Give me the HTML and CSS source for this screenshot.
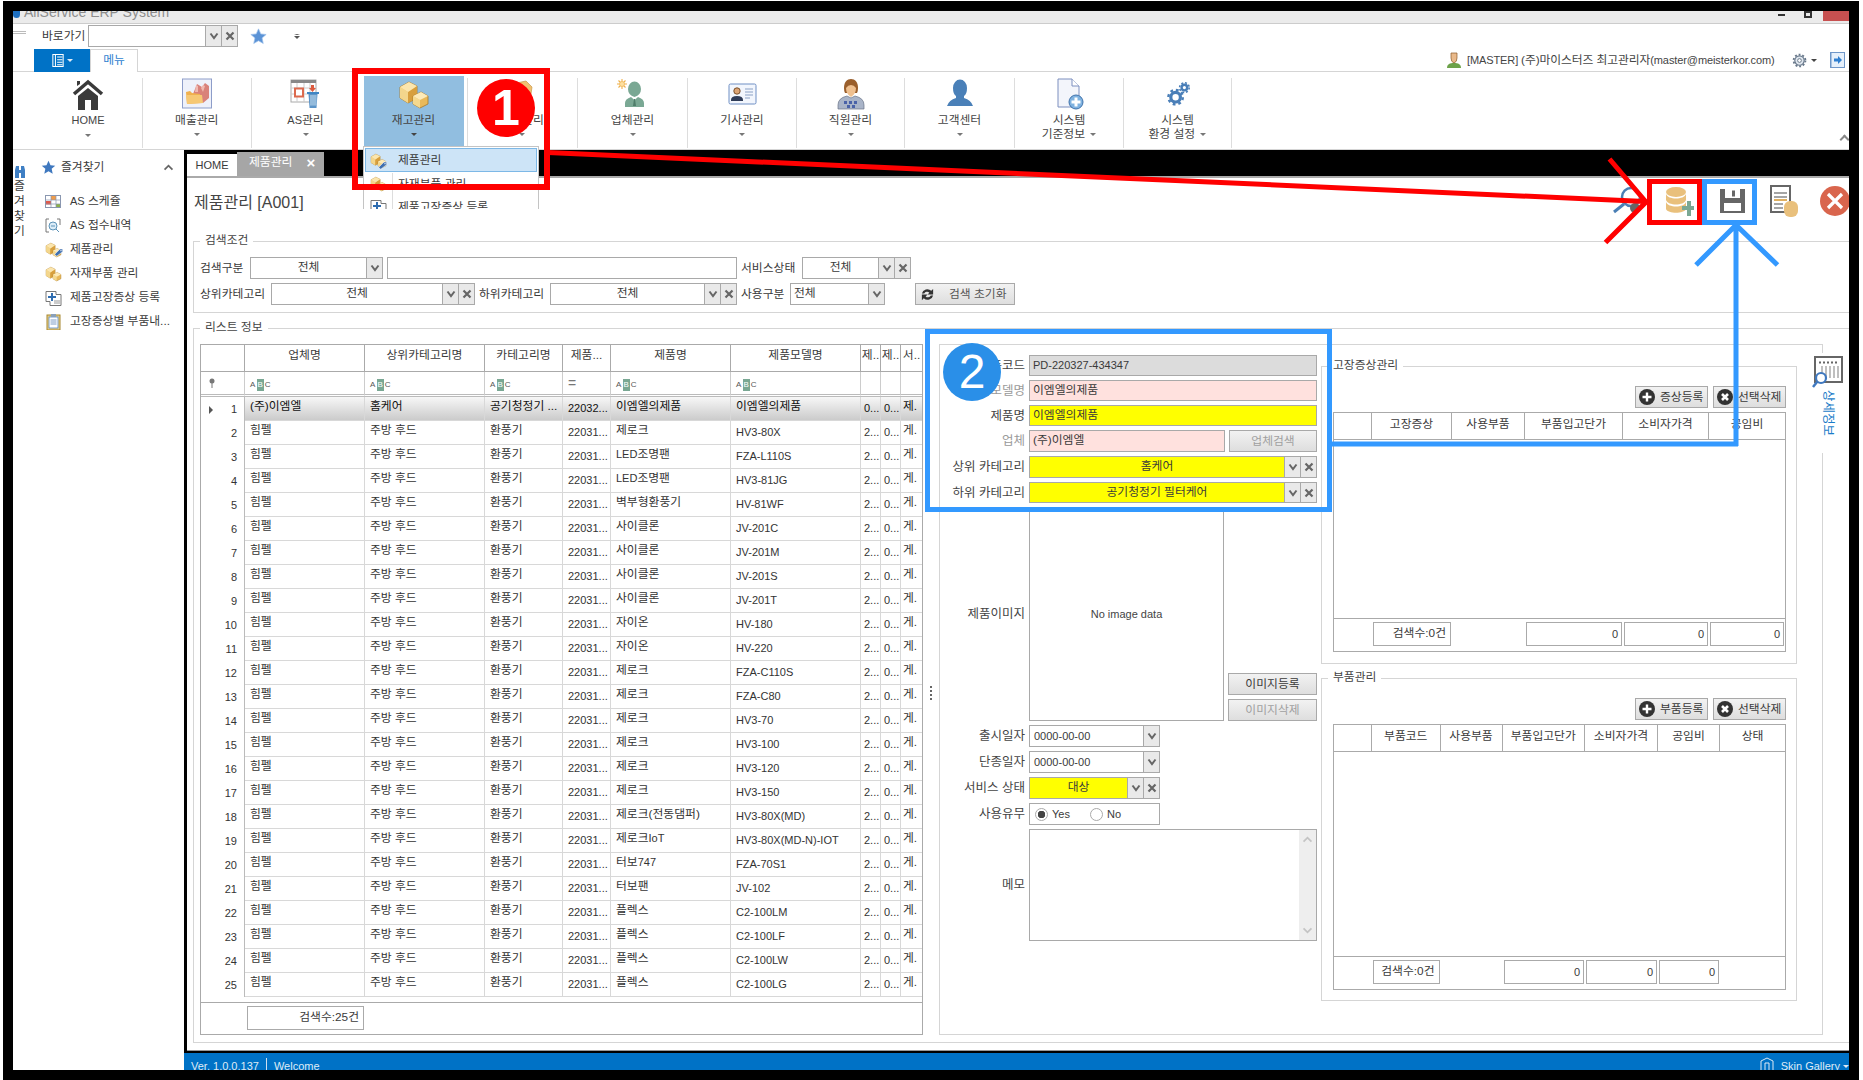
FILE: index.html
```html
<!DOCTYPE html>
<html lang="ko">
<head>
<meta charset="utf-8">
<title>AllService ERP System</title>
<link rel="stylesheet" href="styles.css">
</head>
<body>
<svg class="defs" aria-hidden="true">
  <symbol id="chev" viewBox="0 0 10 8"><path d="M1.5 1.5 5 6l3.500-4.500" fill="none" stroke="#666" stroke-width="2"/></symbol>
  <symbol id="cross" viewBox="0 0 10 10"><path d="M1.500 1.500l7 7m0-7l-7 7" fill="none" stroke="#666" stroke-width="2.200"/></symbol>
  <symbol id="box" viewBox="0 0 32 32">
    <path d="M2 9 11 4l8 4v12l-9 5-8-5z" fill="#e9b95a" stroke="#a87a28" stroke-width=".8"/>
    <path d="M2 9l8 5v11l-8-5z" fill="#f3d68c"/><path d="M10 14l9-6v12l-9 5z" fill="#d79f3e"/>
    <path d="M2 9 11 4l8 4-9 6z" fill="#fbe6ae"/>
    <path d="M15 18l8-4 7 4v8l-8 4-7-4z" fill="#e9b95a" stroke="#a87a28" stroke-width=".8"/>
    <path d="M15 18l7 4v8l-7-4z" fill="#f5d98f"/><path d="M15 18l8-4 7 4-8 4z" fill="#fdeab8"/>
  </symbol>
  <symbol id="tag" viewBox="0 0 18 18">
    <path d="M7 17l-3-3 8-8h4v4z" fill="#3f6fb0" stroke="#fff" stroke-width=".8"/><circle cx="13.500" cy="8.500" r="1" fill="#fff"/>
  </symbol>
</svg>

<div class="screen">
<div class="frame">
<div class="app">

  <div class="titlebar">
    <span class="logo-dot"></span><span class="apptitle">AllService ERP System</span>
    <span class="winctl">
      <span class="win-min"></span><span class="win-max"></span><span class="win-close"></span>
    </span>
  </div>

  <div class="quickbar">
    <span class="grip"></span>
    <span class="qlabel">바로가기</span>
    <div class="combo qcombo"><span class="val"></span><span class="dd"><svg class="ic-chev"><use href="#chev"/></svg></span><span class="dd"><svg class="ic-x"><use href="#cross"/></svg></span></div>
    <svg class="qstar" viewBox="0 0 20 20"><path d="M10 1l2.700 6 6.300.6-4.800 4.200 1.400 6.400L10 15l-5.600 3.200 1.400-6.400L1 7.600 7.300 7z" fill="#5b93d6" stroke="#9cc0ea" stroke-width=".8"/></svg>
    <span class="qmore"></span>
  </div>

  <div class="tabbar">
    <span class="appbtn"><svg viewBox="0 0 14 16" class="appbtn-ic"><path d="M1 1h12v14H1zM4 1v14M6 4h6M6 7h6M6 10h6M6 13h6" fill="none" stroke="#fff" stroke-width="1.200"/></svg><i class="tinyarrow white"></i></span>
    <span class="menutab">메뉴</span>
    <span class="userbox">
      <svg class="uicon" viewBox="0 0 16 16"><path d="M1 16c0-4 3-5 7-5s7 1 7 5z" fill="#6da24a"/><path d="M5 1h6v5q0 4-3 5-3-1-3-5z" fill="#e9b98a" stroke="#8a5a2a" stroke-width=".7"/></svg>
      <span class="utext"><span class="lat">[MASTER] </span>(주)마이스터즈 최고관리자<span class="lat">(master@meisterkor.com)</span></span>
      <svg class="ugear" viewBox="0 0 16 16"><circle cx="8" cy="8" r="5" fill="#dfe6ee" stroke="#67778a" stroke-width="1.200"/><circle cx="8" cy="8" r="6.300" fill="none" stroke="#67778a" stroke-width="2" stroke-dasharray="2 2"/><circle cx="8" cy="8" r="2" fill="#fff" stroke="#67778a"/></svg>
      <i class="tinyarrow dark"></i>
      <svg class="uexit" viewBox="0 0 15 16"><rect x=".5" y=".5" width="14" height="15" fill="#e6f0fb" stroke="#6f97c9"/><path d="M1 1v14" stroke="#6f97c9"/><path d="M4 6.500h4V4l4 4-4 4V9.500H4z" fill="#2f7fd0"/></svg>
    </span>
  </div>

  <div class="ribbon">
    <div class="ritem">
      <svg class="ricon" viewBox="0 0 32 32"><path d="M2 16 16 4l14 12" fill="none" stroke="#3a3a3a" stroke-width="3.600"/><path d="M5 8V3h3v3z" fill="#3a3a3a"/><path d="M6 18 16 10l10 8v14h-7V22h-6v10H6z" fill="#3a3a3a"/></svg>
      <span class="rlabel lat">HOME</span><i class="tinyarrow gray"></i>
    </div>
    <div class="ritem">
      <svg class="ricon" viewBox="0 0 32 32"><rect x="1.500" y="1" width="29" height="29" fill="#eef1fa" stroke="#8d9dc9"/><path d="M12 16 16 6l5 3 3-4 4 3v12l-6 5-7-2z" fill="#d9827a"/><path d="M14 14l1-7 2 1v6zm6-4 2-3 2 1-2 6z" fill="#f0b9b0"/><path d="M5 14l4-1 2 2 8 1 2 9-15 1z" fill="#f0b04e"/><path d="M5 17h16l1 8-16 1z" fill="#f6c874"/></svg>
      <span class="rlabel">매출관리</span><i class="tinyarrow gray"></i>
    </div>
    <div class="ritem">
      <svg class="ricon" viewBox="0 0 32 32"><rect x="1" y="2" width="25" height="22" fill="#fff" stroke="#aaa"/><rect x="1" y="2" width="25" height="3" fill="#888"/><path d="M1 10h25M1 16h25M7 5v19M14 5v19M20 5v19" stroke="#ccc" fill="none"/><rect x="5" y="10.500" width="8" height="8" fill="#fff" stroke="#dc6a4e" stroke-width="2"/><path d="M21 7h3v3h2l-3.500 4-3.500-4h2z" fill="#dc5a3e"/><rect x="17" y="14" width="12" height="2" fill="#3f86c4"/><path d="M18.500 16h9l-1 14h-7z" fill="#5c94c8"/><path d="M20 18h7M20 20h7M20 22h7M20 24h7M20 26h7M21 17v11M23 17v11M25 17v11" stroke="#cfe0f0" stroke-width=".6"/></svg>
      <span class="rlabel"><span class="lat">AS</span>관리</span><i class="tinyarrow gray"></i>
    </div>
    <div class="ritem active">
      <svg class="ricon"><use href="#box"/></svg>
      <span class="rlabel">재고관리</span><i class="tinyarrow dark"></i>
    </div>
    <div class="ritem">
      <svg class="ricon" viewBox="0 0 32 32"><path d="M6 6l14-3 6 6-2 14-14 4z" fill="#f0c070" stroke="#c9984a" stroke-width=".7"/></svg>
      <span class="rlabel">발주관리</span><i class="tinyarrow gray"></i>
    </div>
    <div class="ritem">
      <svg class="ricon" viewBox="0 0 32 32"><g stroke="#eeb04a" stroke-width="1.100"><path d="M5 1v10M0 6h10M1.500 2.500l7 7m0-7l-7 7"/></g><circle cx="5" cy="6" r="2.500" fill="#fde0a0" stroke="#eeb04a" stroke-width=".6"/><path d="M11 11a6.500 7.500 0 1 1 13 0q0 6-6.500 8-6.500-2-6.500-8z" fill="#7aa894"/><path d="M8 29v-4q0-4 6-6l3.500 3 3.500-3q6 2 6 6v4z" fill="#7aa894"/><path d="M17 21h1l1 7h-3z" fill="#4f7d6a"/></svg>
      <span class="rlabel">업체관리</span><i class="tinyarrow gray"></i>
    </div>
    <div class="ritem">
      <svg class="ricon" viewBox="0 0 32 32"><rect x="3" y="6" width="27" height="20" rx="1.500" fill="#f2f6fd" stroke="#6f8fc4"/><circle cx="11" cy="13" r="3.200" fill="#dca474" stroke="#6d4520" stroke-width=".9"/><path d="M5 23v-1q0-4 6-4t6 4v1z" fill="#2f3c58"/><path d="M19 11h8M19 14h8M19 17h8M19 20h5" stroke="#8aa0c4" fill="none"/></svg>
      <span class="rlabel">기사관리</span><i class="tinyarrow gray"></i>
    </div>
    <div class="ritem">
      <svg class="ricon" viewBox="0 0 32 32"><path d="M9 10C9 4 12 1 16 1s7 3 7 9q0 3-1 5H10q-1-2-1-5z" fill="#9a5f2c"/><path d="M11 10q2-3 5-3t5 3q0 6-5 9-5-3-5-9z" fill="#efc08f"/><path d="M3 31v-4q0-7 9-9l4 2 4-2q9 2 9 9v4z" fill="#a9b4c8" stroke="#6a7486" stroke-width=".7"/><path d="M9 23h3v3H9zm5 0h3v3h-3zm5 0h3v3h-3zm-7 4h3v3h-3zm5 0h3v3h-3z" fill="#4a62a8"/></svg>
      <span class="rlabel">직원관리</span><i class="tinyarrow gray"></i>
    </div>
    <div class="ritem">
      <svg class="ricon" viewBox="0 0 32 32"><path d="M9 10a7 8.500 0 1 1 14 0q0 6-3 8v2q7 2 9 8H3q2-6 9-8v-2q-3-2-3-8z" fill="#4a80b8"/></svg>
      <span class="rlabel">고객센터</span><i class="tinyarrow gray"></i>
    </div>
    <div class="ritem">
      <svg class="ricon" viewBox="0 0 32 32"><path d="M5 1h14l7 7v21H5z" fill="#f3f5fb" stroke="#7d8fbf"/><path d="M19 1v7h7" fill="#fff" stroke="#7d8fbf"/><circle cx="23" cy="24" r="7" fill="#7fb2e0" stroke="#3f72ab"/><path d="M21.500 19.500h3v3h3v3h-3v3h-3v-3h-3v-3h3z" fill="#fff"/></svg>
      <span class="rlabel">시스템<br>기준정보 <i class="tinyarrow gray inl"></i></span>
    </div>
    <div class="ritem">
      <svg class="ricon" viewBox="-5 -4 40 40"><circle cx="12" cy="20" r="6" fill="none" stroke="#4a7fb8" stroke-width="4"/><circle cx="12" cy="20" r="9" fill="none" stroke="#4a7fb8" stroke-width="3" stroke-dasharray="3.500 3.580"/><circle cx="23" cy="8" r="3.500" fill="none" stroke="#4a7fb8" stroke-width="3"/><circle cx="23" cy="8" r="6" fill="none" stroke="#4a7fb8" stroke-width="2" stroke-dasharray="2.500 2.210"/></svg>
      <span class="rlabel">시스템<br>환경 설정 <i class="tinyarrow gray inl"></i></span>
    </div>
    <span class="rcollapse"></span>
  </div>

  <div class="main">
    <aside class="sidebar">
      <div class="strip">
        <svg class="binoc" viewBox="0 0 12 14"><path d="M1 5l1-4h3v4h2V1h3l1 4v8H7V8H5v5H1z" fill="#3f7fc4"/></svg>
        <span class="striptext">즐겨찾기</span>
      </div>
      <div class="favs">
        <div class="favhead">
          <svg class="fstar" viewBox="0 0 20 20"><path d="M10 1l2.700 6 6.300.6-4.800 4.200 1.400 6.400L10 15l-5.600 3.200 1.400-6.400L1 7.600 7.300 7z" fill="#3f78bf"/></svg>
          <span>즐겨찾기</span>
          <svg class="fchev" viewBox="0 0 12 8"><path d="M1.500 6.500 6 2l4.500 4.500" fill="none" stroke="#666" stroke-width="2"/></svg>
        </div>
        <ul class="favlist">
          <li><svg class="fic" viewBox="0 0 17 17"><rect x=".5" y="2.500" width="15" height="12" fill="#fff" stroke="#8a97b0"/><rect x="1" y="8" width="5" height="3.500" fill="#e05a4a"/><rect x="6" y="3" width="5" height="4" fill="#ef9c4a"/><rect x="11" y="11" width="4" height="3" fill="#8cb04a"/><path d="M6 3v11M11 3v11M1 7h14M1 11h14" stroke="#8a97b0" stroke-width=".7" fill="none"/></svg><span class="lat">AS</span>&nbsp;스케쥴</li>
          <li><svg class="fic" viewBox="0 0 17 17"><path d="M4 2H1v13h3m8-13h3v6" fill="none" stroke="#777"/><circle cx="8" cy="9" r="4" fill="#dbecf7" stroke="#5c93b8"/><path d="M6 9h4M11 12l3 3" stroke="#5c93b8" fill="none"/></svg><span class="lat">AS</span>&nbsp;접수내역</li>
          <li><svg class="fic"><use href="#box"/></svg><svg class="ftag"><use href="#tag"/></svg>제품관리</li>
          <li><svg class="fic"><use href="#box"/></svg>자재부품 관리</li>
          <li><svg class="fic" viewBox="0 0 17 17"><path d="M1 2.500h10v3h5v11H5v-4H1z" fill="#fff" stroke="#777"/><path d="M6 4h2v3h3v2H8v3H6V9H3V7h3z" fill="#2f6db0"/><path d="M9 12h6M9 14h6" stroke="#999"/></svg>제품고장증상 등록</li>
          <li><svg class="fic" viewBox="0 0 17 17"><rect x="2" y="2" width="13" height="15" fill="#ecd28a" stroke="#a6862e"/><rect x="4" y="4" width="9" height="11" fill="#fff" stroke="#3f78bf" stroke-width=".7"/><rect x="6" y="1" width="5" height="3" fill="#8aa0b8"/><path d="M5.500 7h6M5.500 9h6M5.500 11h6" stroke="#5c83b8" stroke-width=".8"/></svg>고장증상별 부품내...</li>
        </ul>
      </div>
    </aside>

    <section class="workspace">
      <div class="worktabs">
        <span class="wtab lat">HOME</span>
        <span class="wtab on">제품관리<b class="wclose">×</b></span>
      </div>
      <div class="content">
        <div class="head">
          <h1 class="pagetitle">제품관리 [A001]</h1>
          <div class="tools">
            <svg class="t-search" viewBox="0 0 38 30"><circle cx="19" cy="12" r="9" fill="none" stroke="#4a7fb5" stroke-width="2.500"/><path d="M12 19 2 27" stroke="#4a7fb5" stroke-width="3"/><circle cx="23" cy="23" r="5" fill="#666"/></svg>
            <svg class="t-db" viewBox="0 0 29 32"><ellipse cx="11" cy="7" rx="10" ry="5" fill="#e9c07c"/><path d="M1 9c2 6 18 6 20 0v6c-2 6-18 6-20 0z" fill="#e9c07c"/><path d="M1 17c2 6 18 6 20 0v7c-2 5-18 5-20 0z" fill="#e9c07c"/><path d="M17 21h5v-5h4v5h3v4h-3v6h-4v-6h-5z" fill="#7aa894"/></svg>
            <svg class="t-save" viewBox="0 0 25 32"><path d="M0 4h25v24H0z" fill="#666"/><rect x="5" y="4" width="15" height="9" fill="#fff"/><rect x="12" y="5.500" width="3" height="6" fill="#666"/><rect x="4" y="18" width="17" height="8" fill="#fff"/></svg>
            <svg class="t-doc" viewBox="0 0 28 32"><rect x="1" y="1" width="19" height="26" fill="#fff" stroke="#666" stroke-width="2"/><path d="M4 8h13M4 12h13" stroke="#888" stroke-width="1.500"/><path d="M4 15h13" stroke="#e0b060" stroke-width="2"/><path d="M4 19h9M4 23h9" stroke="#888" stroke-width="1.500"/><rect x="14" y="16" width="14" height="16" rx="6" fill="#e9c07c"/></svg>
            <svg class="t-close" viewBox="0 0 30 32"><circle cx="15" cy="16" r="15" fill="#d9654d"/><path d="M8 9l14 14m0-14L8 23" stroke="#fff" stroke-width="3.200"/></svg>
          </div>
        </div>

        <div class="group search">
          <span class="gtitle">검색조건</span>
          <div class="srow">
            <span class="w46">검색구분</span>
            <div class="combo w133"><span class="val">전체</span><span class="dd"><svg class="ic-chev"><use href="#chev"/></svg></span></div>
            <div class="plain w350"></div>
            <span class="w57">서비스상태</span>
            <div class="combo w109"><span class="val">전체</span><span class="dd"><svg class="ic-chev"><use href="#chev"/></svg></span><span class="dd"><svg class="ic-x"><use href="#cross"/></svg></span></div>
          </div>
          <div class="srow">
            <span class="w67">상위카테고리</span>
            <div class="combo w204"><span class="val">전체</span><span class="dd"><svg class="ic-chev"><use href="#chev"/></svg></span><span class="dd"><svg class="ic-x"><use href="#cross"/></svg></span></div>
            <span class="w67">하위카테고리</span>
            <div class="combo w187"><span class="val">전체</span><span class="dd"><svg class="ic-chev"><use href="#chev"/></svg></span><span class="dd"><svg class="ic-x"><use href="#cross"/></svg></span></div>
            <span class="w45">사용구분</span>
            <div class="combo w95"><span class="val left">전체</span><span class="dd"><svg class="ic-chev"><use href="#chev"/></svg></span></div>
            <button class="btn reset"><svg class="ic-refresh" viewBox="0 0 16 16"><path d="M2 7a6 6 0 0 1 10-3l2-2v6H8l2-2a3.500 3.500 0 0 0-5.500 1zM14 9a6 6 0 0 1-10 3l-2 2V8h6l-2 2a3.500 3.500 0 0 0 5.500-1z" fill="#333"/></svg><span>검색 초기화</span></button>
          </div>
        </div>

        <div class="group listgroup">
          <span class="gtitle">리스트 정보</span>

          <div class="gridbox">
            <table class="grid">
              <colgroup><col class="c0"><col class="c1"><col class="c1"><col class="c3"><col class="c4"><col class="c1"><col class="c6"><col class="c7"><col class="c7"><col class="c9"></colgroup>
              <thead>
                <tr class="hrow"><th></th><th>업체명</th><th>상위카테고리명</th><th>카테고리명</th><th>제품...</th><th>제품명</th><th>제품모델명</th><th>제..</th><th>제..</th><th>서..</th></tr>
                <tr class="frow-g"><td class="pin"><svg class="ic-pin" viewBox="0 0 6 10"><circle cx="3" cy="3" r="2.500" fill="#777"/><path d="M3 5v5" stroke="#777"/></svg></td><td><span class="abc">A<b>B</b>C</span></td><td><span class="abc">A<b>B</b>C</span></td><td><span class="abc">A<b>B</b>C</span></td><td class="eq">=</td><td><span class="abc">A<b>B</b>C</span></td><td><span class="abc">A<b>B</b>C</span></td><td></td><td></td><td></td></tr>
              </thead>
              <tbody>
                <tr class="sel"><td class="rh"><i class="rowtri"></i>1</td><td>(주)이엠엘</td><td>홈케어</td><td>공기청정기 ...</td><td class="n">22032...</td><td>이엠엘의제품</td><td>이엠엘의제품</td><td class="n">0...</td><td class="n">0...</td><td>제.</td></tr>
                <tr><td class="rh">2</td><td>힘펠</td><td>주방 후드</td><td>환풍기</td><td class="n">22031...</td><td>제로크</td><td class="n">HV3-80X</td><td class="n">2...</td><td class="n">0...</td><td>게.</td></tr>
                <tr><td class="rh">3</td><td>힘펠</td><td>주방 후드</td><td>환풍기</td><td class="n">22031...</td><td><span class="lat">LED</span>조명팬</td><td class="n">FZA-L110S</td><td class="n">2...</td><td class="n">0...</td><td>게.</td></tr>
                <tr><td class="rh">4</td><td>힘펠</td><td>주방 후드</td><td>환풍기</td><td class="n">22031...</td><td><span class="lat">LED</span>조명팬</td><td class="n">HV3-81JG</td><td class="n">2...</td><td class="n">0...</td><td>게.</td></tr>
                <tr><td class="rh">5</td><td>힘펠</td><td>주방 후드</td><td>환풍기</td><td class="n">22031...</td><td>벽부형환풍기</td><td class="n">HV-81WF</td><td class="n">2...</td><td class="n">0...</td><td>게.</td></tr>
                <tr><td class="rh">6</td><td>힘펠</td><td>주방 후드</td><td>환풍기</td><td class="n">22031...</td><td>사이클론</td><td class="n">JV-201C</td><td class="n">2...</td><td class="n">0...</td><td>게.</td></tr>
                <tr><td class="rh">7</td><td>힘펠</td><td>주방 후드</td><td>환풍기</td><td class="n">22031...</td><td>사이클론</td><td class="n">JV-201M</td><td class="n">2...</td><td class="n">0...</td><td>게.</td></tr>
                <tr><td class="rh">8</td><td>힘펠</td><td>주방 후드</td><td>환풍기</td><td class="n">22031...</td><td>사이클론</td><td class="n">JV-201S</td><td class="n">2...</td><td class="n">0...</td><td>게.</td></tr>
                <tr><td class="rh">9</td><td>힘펠</td><td>주방 후드</td><td>환풍기</td><td class="n">22031...</td><td>사이클론</td><td class="n">JV-201T</td><td class="n">2...</td><td class="n">0...</td><td>게.</td></tr>
                <tr><td class="rh">10</td><td>힘펠</td><td>주방 후드</td><td>환풍기</td><td class="n">22031...</td><td>자이온</td><td class="n">HV-180</td><td class="n">2...</td><td class="n">0...</td><td>게.</td></tr>
                <tr><td class="rh">11</td><td>힘펠</td><td>주방 후드</td><td>환풍기</td><td class="n">22031...</td><td>자이온</td><td class="n">HV-220</td><td class="n">2...</td><td class="n">0...</td><td>게.</td></tr>
                <tr><td class="rh">12</td><td>힘펠</td><td>주방 후드</td><td>환풍기</td><td class="n">22031...</td><td>제로크</td><td class="n">FZA-C110S</td><td class="n">2...</td><td class="n">0...</td><td>게.</td></tr>
                <tr><td class="rh">13</td><td>힘펠</td><td>주방 후드</td><td>환풍기</td><td class="n">22031...</td><td>제로크</td><td class="n">FZA-C80</td><td class="n">2...</td><td class="n">0...</td><td>게.</td></tr>
                <tr><td class="rh">14</td><td>힘펠</td><td>주방 후드</td><td>환풍기</td><td class="n">22031...</td><td>제로크</td><td class="n">HV3-70</td><td class="n">2...</td><td class="n">0...</td><td>게.</td></tr>
                <tr><td class="rh">15</td><td>힘펠</td><td>주방 후드</td><td>환풍기</td><td class="n">22031...</td><td>제로크</td><td class="n">HV3-100</td><td class="n">2...</td><td class="n">0...</td><td>게.</td></tr>
                <tr><td class="rh">16</td><td>힘펠</td><td>주방 후드</td><td>환풍기</td><td class="n">22031...</td><td>제로크</td><td class="n">HV3-120</td><td class="n">2...</td><td class="n">0...</td><td>게.</td></tr>
                <tr><td class="rh">17</td><td>힘펠</td><td>주방 후드</td><td>환풍기</td><td class="n">22031...</td><td>제로크</td><td class="n">HV3-150</td><td class="n">2...</td><td class="n">0...</td><td>게.</td></tr>
                <tr><td class="rh">18</td><td>힘펠</td><td>주방 후드</td><td>환풍기</td><td class="n">22031...</td><td>제로크(전동댐퍼)</td><td class="n">HV3-80X(MD)</td><td class="n">2...</td><td class="n">0...</td><td>게.</td></tr>
                <tr><td class="rh">19</td><td>힘펠</td><td>주방 후드</td><td>환풍기</td><td class="n">22031...</td><td>제로크<span class="lat">IoT</span></td><td class="n">HV3-80X(MD-N)-IOT</td><td class="n">2...</td><td class="n">0...</td><td>게.</td></tr>
                <tr><td class="rh">20</td><td>힘펠</td><td>주방 후드</td><td>환풍기</td><td class="n">22031...</td><td>터보<span class="lat">747</span></td><td class="n">FZA-70S1</td><td class="n">2...</td><td class="n">0...</td><td>게.</td></tr>
                <tr><td class="rh">21</td><td>힘펠</td><td>주방 후드</td><td>환풍기</td><td class="n">22031...</td><td>터보팬</td><td class="n">JV-102</td><td class="n">2...</td><td class="n">0...</td><td>게.</td></tr>
                <tr><td class="rh">22</td><td>힘펠</td><td>주방 후드</td><td>환풍기</td><td class="n">22031...</td><td>플렉스</td><td class="n">C2-100LM</td><td class="n">2...</td><td class="n">0...</td><td>게.</td></tr>
                <tr><td class="rh">23</td><td>힘펠</td><td>주방 후드</td><td>환풍기</td><td class="n">22031...</td><td>플렉스</td><td class="n">C2-100LF</td><td class="n">2...</td><td class="n">0...</td><td>게.</td></tr>
                <tr><td class="rh">24</td><td>힘펠</td><td>주방 후드</td><td>환풍기</td><td class="n">22031...</td><td>플렉스</td><td class="n">C2-100LW</td><td class="n">2...</td><td class="n">0...</td><td>게.</td></tr>
                <tr><td class="rh">25</td><td>힘펠</td><td>주방 후드</td><td>환풍기</td><td class="n">22031...</td><td>플렉스</td><td class="n">C2-100LG</td><td class="n">2...</td><td class="n">0...</td><td>게.</td></tr>
              </tbody>
            </table>
            <div class="gridfoot"><span class="sumbox countbox">검색수:25건</span></div>
          </div>

          <div class="splitter"><i></i><i></i><i></i><i></i></div>

          <div class="detail">
            <div class="form">
              <div class="frow h21"><label>제품코드</label><div class="field gray lat">PD-220327-434347</div></div>
              <div class="frow h21"><label class="dim">제품모델명</label><div class="field pink">이엠엘의제품</div></div>
              <div class="frow h21"><label>제품명</label><div class="field yellow">이엠엘의제품</div></div>
              <div class="frow"><label class="dim">업체</label><div class="splitfield"><div class="field pink">(주)이엠엘</div><button class="btn off">업체검색</button></div></div>
              <div class="frow"><label>상위 카테고리</label><div class="combo yellow"><span class="val">홈케어</span><span class="dd"><svg class="ic-chev"><use href="#chev"/></svg></span><span class="dd"><svg class="ic-x"><use href="#cross"/></svg></span></div></div>
              <div class="frow h21"><label>하위 카테고리</label><div class="combo yellow"><span class="val">공기청정기 필터케어</span><span class="dd"><svg class="ic-chev"><use href="#chev"/></svg></span><span class="dd"><svg class="ic-x"><use href="#cross"/></svg></span></div></div>
              <div class="frow imgrow">
                <label>제품이미지</label>
                <div class="imgwrap">
                  <div class="imgbox lat">No image data</div>
                  <div class="imgbtns"><button class="btn">이미지등록</button><button class="btn off">이미지삭제</button></div>
                </div>
              </div>
              <div class="frow"><label>출시일자</label><div class="combo w131"><span class="val left lat">0000-00-00</span><span class="dd"><svg class="ic-chev"><use href="#chev"/></svg></span></div></div>
              <div class="frow"><label>단종일자</label><div class="combo w131"><span class="val left lat">0000-00-00</span><span class="dd"><svg class="ic-chev"><use href="#chev"/></svg></span></div></div>
              <div class="frow"><label>서비스 상태</label><div class="combo w131 yellow"><span class="val">대상</span><span class="dd"><svg class="ic-chev"><use href="#chev"/></svg></span><span class="dd"><svg class="ic-x"><use href="#cross"/></svg></span></div></div>
              <div class="frow"><label>사용유무</label><div class="radios w131 lat"><span class="radio on"></span><span class="rtext">Yes</span><span class="radio"></span><span>No</span></div></div>
              <div class="frow memorow"><label>메모</label><div class="memo"><span class="memoscroll"><svg class="ic-mchev" viewBox="0 0 12 8"><path d="M1.500 6.500 6 2l4.500 4.500" fill="none" stroke="#c4c4c4" stroke-width="2"/></svg><svg class="ic-mchev" viewBox="0 0 12 8"><path d="M1.500 1.500 6 6l4.500-4.500" fill="none" stroke="#c4c4c4" stroke-width="2"/></svg></span></div></div>
            </div>

            <div class="subs">
              <div class="group sub g1">
                <span class="gtitle">고장증상관리</span>
                <div class="subbtns">
                  <button class="btn act"><svg class="ic-circ" viewBox="0 0 16 16"><circle cx="8" cy="8" r="8" fill="#333"/><path d="M6.800 3.500h2.400v3.300h3.300v2.400H9.200v3.300H6.800V9.200H3.500V6.800h3.300z" fill="#fff"/></svg>증상등록</button>
                  <button class="btn act"><svg class="ic-circ" viewBox="0 0 16 16"><circle cx="8" cy="8" r="8" fill="#333"/><path d="M5 5l6 6m0-6l-6 6" stroke="#fff" stroke-width="2.600"/></svg>선택삭제</button>
                </div>
                <div class="subtable">
                  <div class="shead sym"><span></span><span>고장증상</span><span>사용부품</span><span>부품입고단가</span><span>소비자가격</span><span>공임비</span></div>
                  <div class="sbody"></div>
                  <div class="sfoot sym"><span></span><span class="sumbox">검색수:0건</span><span></span><span class="sumbox num">0</span><span class="sumbox num">0</span><span class="sumbox num">0</span></div>
                </div>
              </div>
              <div class="group sub g2">
                <span class="gtitle">부품관리</span>
                <div class="subbtns">
                  <button class="btn act"><svg class="ic-circ" viewBox="0 0 16 16"><circle cx="8" cy="8" r="8" fill="#333"/><path d="M6.800 3.500h2.400v3.300h3.300v2.400H9.200v3.300H6.800V9.200H3.500V6.800h3.300z" fill="#fff"/></svg>부품등록</button>
                  <button class="btn act"><svg class="ic-circ" viewBox="0 0 16 16"><circle cx="8" cy="8" r="8" fill="#333"/><path d="M5 5l6 6m0-6l-6 6" stroke="#fff" stroke-width="2.600"/></svg>선택삭제</button>
                </div>
                <div class="subtable">
                  <div class="shead parts"><span></span><span>부품코드</span><span>사용부품</span><span>부품입고단가</span><span>소비자가격</span><span>공임비</span><span>상태</span></div>
                  <div class="sbody"></div>
                  <div class="sfoot parts"><span></span><span class="sumbox">검색수:0건</span><span></span><span class="sumbox num">0</span><span class="sumbox num">0</span><span class="sumbox num">0</span><span></span></div>
                </div>
              </div>
            </div>
          </div>

          <div class="sidetab">
            <svg class="ic-detail" viewBox="0 0 31 33"><rect x="3" y="1" width="27" height="25" fill="#fff" stroke="#666" stroke-width="2"/><path d="M7 6.500h20" stroke="#666" stroke-width="2" stroke-dasharray="2 2"/><path d="M10 10v12M14 10v12M18 10v12M22 10v12M26 10v12" stroke="#aaa" stroke-width="1.500"/><circle cx="9" cy="22" r="5" fill="#fff" stroke="#3f78bf" stroke-width="2.200"/><path d="M5 26l-4 5" stroke="#3f78bf" stroke-width="2.500"/></svg>
            <span class="sidetext">상세정보</span>
          </div>
        </div>
      </div>
      <div class="statusbar">
        <span class="lat">Ver. 1.0.0.137</span><i class="sbar"></i><span class="lat">Welcome</span>
        <span class="skin"><svg class="ic-skin" viewBox="0 0 14 16"><path d="M1 15V4l6-3 6 3v11M5 15V6h4v9" fill="none" stroke="#dfeaf5"/></svg><span class="lat">Skin Gallery</span><i class="tinyarrow white"></i></span>
      </div>
    </section>
  </div>

</div>
</div>

<div class="flyout">
  <div class="fly-item hot"><svg class="fly-ic"><use href="#box"/></svg><svg class="fly-tag"><use href="#tag"/></svg>제품관리</div>
  <div class="fly-item"><svg class="fly-ic"><use href="#box"/></svg>자재부품 관리</div>
  <div class="fly-item"><svg class="fly-ic" viewBox="0 0 17 17"><path d="M1 2.500h10v3h5v11H5v-4H1z" fill="#fff" stroke="#777"/><path d="M6 4h2v3h3v2H8v3H6V9H3V7h3z" fill="#2f6db0"/></svg>제품고장증상 등록</div>
</div>

<svg class="marks" viewBox="0 0 1863 1080" aria-hidden="true">
  <g fill="none" stroke="#f00">
    <rect x="355" y="71" width="192" height="116" stroke-width="6"/>
    <path d="M548 152.500 1645 201.500" stroke-width="5"/>
    <path d="M1609.500 159 1646 202 1605.500 242.500" stroke-width="5"/>
    <rect x="1649.500" y="181.500" width="50" height="41" stroke-width="5"/>
  </g>
  <g fill="none" stroke="#39f">
    <rect x="1704.500" y="181.500" width="50" height="41" stroke-width="5"/>
    <path d="M1736 225V446M1696 265 1736 225 1777.500 265" stroke-width="5"/>
    <path d="M1332 444H1738" stroke-width="5"/>
    <rect x="927.500" y="331.500" width="402" height="178" stroke-width="5"/>
  </g>
</svg>
<div class="badge red">1</div>
<div class="badge blue">2</div>
</div>
</body>
</html>
```

FILE: styles.css
```css
* { box-sizing: border-box; }
html, body { margin: 0; padding: 0; background: #fff; }
body { font: 11.8px/14px "Liberation Sans", "Noto Sans CJK KR", sans-serif; color: #3a3a3a; overflow: hidden; }
.defs { position: absolute; width: 0; height: 0; }
.lat { font-size: 11px; font-family: "Liberation Sans", sans-serif; }
i { font-style: normal; }
ul { list-style: none; margin: 0; padding: 0; }
button { font: inherit; color: inherit; margin: 0; }

.screen { position: relative; width: 1863px; height: 1080px; padding: 1px 4px 0 3px; overflow: hidden; }
.frame { background: #000; padding: 10px; height: 1079px; }
.app { width: 1836px; height: 1059px; background: #fff; display: flex; flex-direction: column; overflow: hidden; }

.tinyarrow { display: inline-block; width: 0; height: 0; border: 3px solid transparent; border-bottom: 0; border-top: 3px solid #777; }
.tinyarrow.white { border-top-color: #dfeaf5; }
.tinyarrow.dark { border-top-color: #444; }
.tinyarrow.gray { border-top-color: #777; }
.tinyarrow.inl { vertical-align: middle; margin-left: 2px; }

/* title */
.titlebar { height: 13px; background: #ebebeb; border-bottom: 1px solid #ccc; display: flex; align-items: flex-start; overflow: hidden; position: relative; }
.logo-dot { width: 7px; height: 7px; background: #1e6fc0; border-radius: 0 0 4px 4px; margin: 0 4px 0 0; flex: none; }
.apptitle { font-size: 14px; line-height: 16px; color: #8d8d8d; margin-top: -7px; white-space: nowrap; }
.winctl { margin-left: auto; display: flex; align-items: flex-start; height: 12px; }
.win-min { width: 7px; height: 2px; background: #333; margin: 3px 19px 0 0; }
.win-max { width: 8px; height: 7px; border: 2px solid #333; margin: 0 11px 0 0; }
.win-close { width: 26px; height: 10px; background: #c75050; }

/* quick */
.quickbar { height: 25px; display: flex; align-items: center; position: relative; padding-bottom: 1px; }
.grip { width: 13px; height: 3px; border-top: 1px solid #bbb; border-bottom: 1px solid #bbb; margin-right: 16px; margin-top: -8px; }
.qlabel { width: 46px; }
.combo { height: 22px; border: 1px solid #a9a9a9; display: flex; background: #fff; }
.combo .val { flex: 1; text-align: center; line-height: 18px; white-space: nowrap; overflow: hidden; }
.combo .val.left { text-align: left; padding-left: 3px; }
.combo .val.lat { padding-left: 4px; line-height: 20px; }
.combo .dd { width: 16px; flex: none; background: #e9e9e9; border-left: 1px solid #a9a9a9; display: flex; align-items: center; justify-content: center; }
.ic-chev { width: 10px; height: 8px; }
.ic-x { width: 10px; height: 10px; }
.qcombo { width: 150px; }
.qstar { width: 17px; height: 17px; margin-left: 12px; }
.qmore { width: 5px; height: 5px; margin-left: 27px; border-top: 1px solid #555; border-left: 3px solid transparent; border-right: 3px solid transparent; position: relative; }
.qmore::after { content: ""; display: block; border: 3px solid transparent; border-bottom: 0; border-top-color: #555; margin: 1px 0 0 -3px; }

/* tabbar */
.tabbar { height: 23px; display: flex; align-items: stretch; border-bottom: 1px solid #d5d5d5; padding-left: 21px; }
.appbtn { width: 56px; background: #0072c6; display: flex; align-items: center; justify-content: center; gap: 3px; height: 23px; }
.appbtn-ic { width: 12px; height: 15px; }
.menutab { width: 48px; height: 23px; border: 1px solid #d5d5d5; border-bottom: 0; background: #fff; text-align: center; line-height: 20px; color: #2f7fd0; }
.userbox { margin-left: auto; display: flex; align-items: center; padding-right: 4px; }
.uicon { width: 16px; height: 16px; margin-right: 5px; }
.utext { white-space: nowrap; width: 320px; color: #444; letter-spacing: -.1px; }
.ugear { width: 15px; height: 15px; margin-left: 5px; }
.userbox > .tinyarrow { margin: 0 13px 0 4px; }
.uexit { width: 15px; height: 16px; }

/* ribbon */
.ribbon { height: 78px; border-bottom: 1px solid #d5d5d5; padding: 6px 0 0 21px; display: grid; grid-template-columns: 109px 108.500px 109px 107px 110.500px 110px 109px 108px 110px 109px 108px 1fr; position: relative; isolation: isolate; }
.ritem { height: 70px; border-right: 1px solid #ddd; display: flex; flex-direction: column; align-items: center; position: relative; text-align: center; }
.ritem:nth-child(3) { border-right-color: transparent; }
.ricon { width: 32px; height: 32px; flex: none; }
.rlabel { margin-top: 3px; line-height: 14px; color: #444; white-space: nowrap; }
.rlabel.lat { line-height: 15px; }
.ritem > .tinyarrow { margin-top: 6px; }
.ritem.active::before { content: ""; position: absolute; left: 3px; right: 3px; top: -2px; bottom: 2px; background: #91bee0; z-index: -1; }
.rcollapse { width: 7px; height: 7px; border-top: 2px solid #888; border-left: 2px solid #888; transform: rotate(45deg); position: absolute; right: 1px; top: 64px; }

/* main */
.main { flex: 1; display: flex; min-height: 0; }
.sidebar { width: 171px; flex: none; display: flex; }
.strip { width: 21px; padding-top: 15px; display: flex; flex-direction: column; align-items: flex-start; overflow: hidden; }
.binoc { width: 12px; height: 14px; margin-left: 1px; }
.striptext { writing-mode: vertical-rl; text-orientation: upright; margin-top: 1px; letter-spacing: 3px; line-height: 12px; width: 12px; margin-left: -1px; }
.favs { flex: 1; padding-top: 5px; min-width: 0; }
.favhead { height: 24px; display: flex; align-items: center; padding-left: 7px; }
.fstar { width: 15px; height: 15px; margin-right: 5px; }
.fchev { width: 11px; height: 7px; margin-left: auto; margin-right: 10px; }
.favlist { margin-top: 10px; }
.favlist li { height: 24px; display: flex; align-items: center; padding-left: 11px; white-space: nowrap; position: relative; }
.fic { width: 17px; height: 17px; margin-right: 8px; flex: none; }
.ftag { width: 12px; height: 12px; position: absolute; left: 18px; top: 8px; }

/* workspace */
.workspace { flex: 1; background: #000; display: flex; flex-direction: column; min-width: 0; }
.worktabs { height: 26px; padding: 2px 0 0 3px; display: flex; align-items: flex-end; }
.wtab { width: 50px; height: 22px; background: #fff; text-align: center; line-height: 22px; }
.wtab.on { width: 87px; height: 24px; background: #a6a6a6; color: #fff; line-height: 21px; display: flex; justify-content: flex-start; padding-left: 12px; gap: 14px; }
.wclose { font-size: 15px; }
.content { flex: 1; margin-left: 3px; margin-bottom: 2px; background: #fff; border-top: 2px solid #aaa; border-bottom: 1px solid #999; padding-left: 6px; display: flex; flex-direction: column; min-height: 0; overflow: hidden; }
.head { height: 63px; flex: none; display: flex; justify-content: space-between; }
.pagetitle { margin: 15px 0 0 1px; font-size: 16px; line-height: 20px; font-weight: normal; color: #444; }
.tools { display: flex; align-items: flex-start; padding-top: 7px; margin-right: -1px; }
.tools svg { height: 32px; flex: none; }
.t-search { width: 38px; height: 30px !important; }
.t-db { width: 29px; margin-left: 15px; }
.t-save { width: 25px; margin-left: 26px; }
.t-doc { width: 28px; margin-left: 25px; }
.t-close { width: 30px; margin-left: 22px; }

/* groups */
.group { border: 1px solid #d5d5d5; position: relative; flex: none; }
.gtitle { position: absolute; left: 6px; top: -9px; background: #fff; padding: 0 5px; line-height: 15px; color: #444; }
.search { border-right: 0; height: 72px; padding: 15px 0 0 6px; display: flex; flex-direction: column; gap: 4px; }
.srow { display: flex; gap: 4px; height: 22px; align-items: center; white-space: nowrap; }
.plain { height: 22px; border: 1px solid #a9a9a9; }
.w45 { width: 45px; } .w46 { width: 46px; } .w57 { width: 57px; } .w67 { width: 67px; }
.w95 { width: 95px; } .w109 { width: 109px; } .w131 { width: 131px; } .w133 { width: 133px; }
.w187 { width: 187px; } .w204 { width: 204px; } .w350 { width: 350px; }
.btn { height: 22px; border: 1px solid #a9a9a9; background: linear-gradient(#f2f2f2, #dedede); padding: 0; display: flex; align-items: center; justify-content: center; white-space: nowrap; }
.btn.off { color: #a0a0a0; }
.reset { width: 100px; margin-left: 26px; justify-content: flex-start; padding-left: 4px; color: #555; }
.reset span { margin-left: 14px; }
.ic-refresh { width: 15px; height: 15px; }

.listgroup { margin-top: 15px; height: 715px; border-right: 0; padding: 15px 0 0 6px; display: flex; }
.gridbox { width: 723px; height: 691px; border: 1px solid #aaa; flex: none; display: flex; flex-direction: column; }
.grid { width: 721px; table-layout: fixed; border-collapse: separate; border-spacing: 0; }
.c0 { width: 44px; } .c1 { width: 120px; } .c3 { width: 78px; } .c4 { width: 48px; }
.c6 { width: 130px; } .c7 { width: 20px; } .c9 { width: 21px; }
.grid th { height: 27px; font-weight: normal; border-right: 1px solid #aaa; border-bottom: 1px solid #aaa; white-space: nowrap; overflow: hidden; padding: 0 0 6px; }
.grid th:last-child, .grid td:last-child { border-right: 0; }
.frow-g td { height: 25px; border-right: 1px solid #ccc; border-bottom: 3px double #bbb; padding: 0 0 0 5px; }
.frow-g td.pin { padding-left: 8px; }
.ic-pin { width: 6px; height: 10px; display: block; }
.abc { font: 8px/12px "Liberation Sans", sans-serif; color: #555; display: inline-block; letter-spacing: .5px; }
.abc b { background: #7aa894; color: #fff; font-weight: normal; display: inline-block; width: 7px; text-align: center; line-height: 12px; margin: 0 1px; }
.eq { font-size: 14px; color: #777; }
.grid tbody td { height: 24px; padding: 0 0 5px 5px; border-right: 1px solid #d8d8d8; border-bottom: 1px solid #d8d8d8; white-space: nowrap; overflow: hidden; line-height: 18px; color: #333; }
.grid tbody td.rh { text-align: right; padding: 0 7px 0 0; border-bottom: 0; border-right: 1px solid #bbb; font-size: 11px; }
.grid tbody td.n { font-size: 11px; font-family: "Liberation Sans", sans-serif; padding-bottom: 2px; }
.grid td.n:nth-last-child(-n+3) { padding-left: 3px; }
.grid td:last-child { padding-left: 2px; }
.rowtri { float: left; width: 0; height: 0; margin: 6px 0 0 8px; border: 4px solid transparent; border-right: 0; border-left-color: #555; }
.sel td:not(.rh) { background: linear-gradient(#f7f7f7, #cbcbcb); color: #111; }
.gridfoot { margin-top: 5px; border-top: 1px solid #aaa; flex: 1; padding: 3px 0 0 46px; }
.sumbox { display: block; height: 24px; border: 1px solid #aaa; text-align: right; padding-right: 4px; line-height: 20px; white-space: nowrap; background: #fff; }
.sumbox.num { font: 11px/22px "Liberation Sans", sans-serif; padding-right: 3px; }
.countbox { width: 117px; }

.splitter { width: 16px; flex: none; display: flex; flex-direction: column; align-items: center; justify-content: center; gap: 2px; }
.splitter i { width: 2px; height: 2px; background: #666; display: block; }

.detail { width: 884px; height: 691px; flex: none; border: 1px solid #d5d5d5; border-right: 0; display: flex; position: relative; }
.detail::before { content: ""; position: absolute; right: 0; top: 0; height: 8px; border-right: 1px solid #d5d5d5; }
.detail::after { content: ""; position: absolute; right: 0; top: 108px; bottom: 0; border-right: 1px solid #d5d5d5; }
.form { width: 381px; flex: none; padding-top: 10px; display: flex; flex-direction: column; gap: 4px; }
.frow { display: grid; grid-template-columns: 85px 288px; column-gap: 4px; align-items: center; height: 22px; }
.frow.h21 { height: 21px; }
.frow label { text-align: right; font-size: 12.500px; white-space: nowrap; color: #444; }
.frow label.dim { color: #9a9a9a; }
.field { height: 100%; border: 1px solid #a9a9a9; padding: 0 3px; line-height: 18px; white-space: nowrap; }
.field.lat { line-height: 19px; }
.field.gray { background: #dcdcdc; }
.field.pink { background: #ffe1de; }
.field.yellow { background: #ff0; }
.combo.yellow .val { background: #ff0; }
.frow .combo { height: 100%; }
.splitfield { display: grid; grid-template-columns: 196px 88px; gap: 4px; height: 100%; }
.imgrow { height: 214px; }
.imgwrap { display: grid; grid-template-columns: 195px 89px; column-gap: 4px; height: 214px; }
.imgbox { border: 1px solid #a9a9a9; display: flex; align-items: center; justify-content: center; color: #444; }
.imgbtns { display: flex; flex-direction: column; justify-content: flex-end; gap: 4px; }
.radios { height: 22px; border: 1px solid #a9a9a9; display: flex; align-items: center; padding-left: 5px; }
.radio { width: 13px; height: 13px; border: 1px solid #aaa; border-radius: 50%; margin-right: 4px; flex: none; background: #fff; }
.radio.on { background: radial-gradient(circle, #444 0 3.500px, #fff 4px); }
.rtext { width: 38px; }
.memorow { height: 112px; }
.memo { height: 112px; border: 1px solid #a9a9a9; position: relative; display: flex; justify-content: flex-end; }
.memoscroll { width: 17px; background: #eee; display: flex; flex-direction: column; justify-content: space-between; align-items: center; padding: 6px 0; }
.ic-mchev { width: 11px; height: 7px; }

.subs { width: 476px; flex: none; padding-top: 21px; display: flex; flex-direction: column; gap: 14px; }
.sub { padding: 19px 10px 0 11px; display: flex; flex-direction: column; width: 476px; }
.g1 { height: 298px; }
.g2 { height: 323px; }
.subbtns { display: flex; justify-content: flex-end; gap: 5px; }
.btn.act { width: 73px; justify-content: flex-start; padding-left: 3px; gap: 5px; }
.ic-circ { width: 16px; height: 16px; flex: none; }
.subtable { margin-top: 4px; border: 1px solid #aaa; display: flex; flex-direction: column; }
.g1 .subtable { height: 240px; }
.g2 .subtable { height: 266px; }
.sym { display: grid; grid-template-columns: 38px 80px 73px 98px 86px 1fr; }
.parts { display: grid; grid-template-columns: 38px 68.500px 62px 82.500px 73px 62px 1fr; }
.shead { height: 27px; border-bottom: 1px solid #aaa; flex: none; }
.shead span { border-right: 1px solid #aaa; text-align: center; line-height: 22px; white-space: nowrap; overflow: hidden; }
.shead span:last-child { border-right: 0; }
.sbody { flex: 1; }
.sfoot { height: 33px; border-top: 1px solid #aaa; flex: none; padding-top: 3px; }
.sfoot .sumbox { margin: 0 1px 0 1px; }

.sidetab { width: 37px; margin-left: -14.500px; flex: none; display: flex; flex-direction: column; align-items: center; padding-top: 12px; position: relative; }
.ic-detail { width: 31px; height: 33px; }
.sidetext { writing-mode: vertical-rl; text-orientation: sideways; color: #1a7cc8; margin-top: 1px; margin-left: 2px; font-size: 12.500px; line-height: 14px; white-space: nowrap; }

/* status */
.statusbar { height: 17px; flex: none; background: #0072c6; color: #dfeaf5; padding: 5px 0 0 7px; display: flex; align-items: flex-start; overflow: hidden; line-height: 16px; }
.sbar { width: 1px; height: 14px; background: #cfe0f0; margin: 0 7px; }
.skin { margin-left: auto; display: flex; align-items: flex-start; gap: 3px; }
.ic-skin { width: 14px; height: 16px; margin-right: 4px; margin-top: -1px; }
.skin .tinyarrow { margin-top: 7px; }

/* flyout menu */
.flyout { position: absolute; left: 363px; top: 146px; width: 176px; height: 63px; background: #fff; border: 1px solid #c4c4c4; border-bottom: 0; overflow: hidden; padding: 1px; z-index: 2; }
.flyout::before { content: ""; position: absolute; left: 28px; top: 26px; bottom: 0; border-left: 1px solid #ddd; }
.fly-item { height: 23px; display: flex; align-items: center; padding-left: 5px; position: relative; white-space: nowrap; }
.fly-item.hot { height: 24px; background: #cde4f7; border: 1px solid #7db8e6; padding-left: 4px; }
.fly-ic { width: 17px; height: 17px; margin-right: 11px; flex: none; }
.fly-tag { width: 12px; height: 12px; position: absolute; left: 10px; top: 9px; }

/* annotations */
.marks { position: absolute; left: 0; top: 0; width: 1863px; height: 1080px; z-index: 3; }
.badge { position: absolute; width: 58px; height: 58px; border-radius: 50%; color: #fff; text-align: center; z-index: 4; font: bold 50px/58px "Liberation Sans", sans-serif; }
.badge.red { left: 477px; top: 79px; background: #f00; }
.badge.blue { left: 943px; top: 343px; background: #2a8fe8; font-weight: normal; font-size: 48px; }
```
